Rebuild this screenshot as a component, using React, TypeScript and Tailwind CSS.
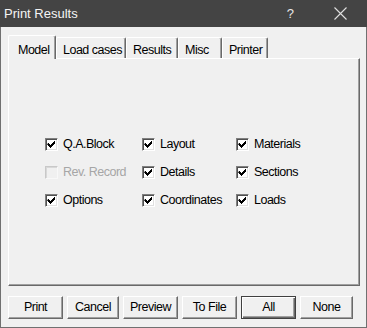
import React from "react";

const font = { fontFamily: '"Liberation Sans", Arial, sans-serif' };

function Check({ checked, disabled }: { checked: boolean; disabled?: boolean }) {
  return (
    <div
      className={
        "w-[13px] h-[13px] shrink-0 border-t border-l border-r border-b flex items-center justify-center " +
        (disabled
          ? "bg-[#f0f0f0] border-t-[#c8c8c8] border-l-[#c8c8c8] border-r-[#f8f8f8] border-b-[#f8f8f8] shadow-[inset_1px_1px_0_#d8d8d8]"
          : "bg-white border-t-[#808080] border-l-[#808080] border-r-white border-b-white shadow-[inset_1px_1px_0_#505050,inset_-1px_-1px_0_#e0e0e0]")
      }
    >
      {checked && (
        <svg width="9" height="9" viewBox="0 0 9 9" className="block">
          <path
            d="M1 3h1v1h1v1h1v-1h1v-1h1v-1h1v-1h1v3h-1v1h-1v1h-1v1h-1v1h-1v-1h-1v-1h-1v-1h-1z"
            fill="#000"
          />
        </svg>
      )}
    </div>
  );
}

function Item({ label, checked, disabled }: { label: string; checked: boolean; disabled?: boolean }) {
  return (
    <div className="flex items-center h-[28px]">
      <Check checked={checked} disabled={disabled} />
      <span
        className={
          "ml-[5px] text-[12.5px] tracking-[-0.5px] leading-none " +
          (disabled ? "text-[#a6a6a6]" : "text-black")
        }
      >
        {label}
      </span>
    </div>
  );
}

function Tab({ label, width, selected }: { label: string; width: string; selected?: boolean }) {
  if (selected) {
    return (
      <div
        className={
          width +
          " relative z-10 h-[24px] -mb-px bg-[#f0f0f0] border-t border-l border-white rounded-tl-[2px] rounded-tr-[2px] border-r border-r-[#696969] shadow-[inset_-1px_0_0_#a0a0a0] pl-[9px] pt-[5px] text-[12.5px] tracking-[-0.5px] text-black"
        }
      >
        {label}
      </div>
    );
  }
  return (
    <div
      className={
        width +
        " h-[21px] border-t border-l border-white rounded-tl-[2px] rounded-tr-[2px] border-r border-r-[#696969] shadow-[inset_-1px_0_0_#a0a0a0] pl-[6px] pt-[3px] text-[12.5px] tracking-[-0.5px] text-black"
      }
    >
      {label}
    </div>
  );
}

function Button({ label, width, isDefault }: { label: string; width: string; isDefault?: boolean }) {
  return (
    <div
      className={
        width +
        " h-[23px] flex items-center justify-center text-[12.5px] tracking-[-0.5px] text-black bg-[#f0f0f0] " +
        (isDefault
          ? "border border-[#404040] shadow-[inset_1px_1px_0_#ffffff,inset_-1px_-1px_0_#696969,inset_-2px_-2px_0_#a0a0a0]"
          : "border-t border-l border-white border-r border-b border-r-[#696969] border-b-[#696969] shadow-[inset_-1px_-1px_0_#a0a0a0]")
      }
    >
      {label}
    </div>
  );
}

export default function App() {
  return (
    <div className="w-[367px] h-[328px] flex flex-col bg-[#f0f0f0] overflow-hidden" style={font}>
      <div className="h-[27px] shrink-0 bg-[#444444] flex items-center text-white">
        <span className="ml-[4px] text-[13px] text-[#f4f4f4]">Print Results</span>
        <span className="ml-auto mr-[40px] text-[13px] text-[#e8e8e8]">?</span>
        <svg width="13" height="13" viewBox="0 0 13 13" className="mr-[20px]">
          <path d="M0.5 0.5L12.5 12.5M12.5 0.5L0.5 12.5" stroke="#e0e0e0" strokeWidth="1.1" />
        </svg>
      </div>
      <div className="flex-1 flex flex-col border-x border-b border-[#707070] pl-[7px] pr-[6px]">
        <div className="mt-[8px] h-[23px] flex items-end">
          <Tab label="Model" width="w-[48px]" selected />
          <Tab label="Load cases" width="w-[70px]" />
          <Tab label="Results" width="w-[52px]" />
          <Tab label="Misc" width="w-[44px]" />
          <Tab label="Printer" width="w-[46px]" />
        </div>
        <div className="h-[228px] border-t border-l border-white border-r border-b border-r-[#696969] border-b-[#696969] shadow-[inset_-1px_-1px_0_#a0a0a0] pl-[36px] pt-[71px]">
          <div className="grid grid-cols-[97px_94px_auto]">
            <Item label="Q.A.Block" checked />
            <Item label="Layout" checked />
            <Item label="Materials" checked />
            <Item label="Rev. Record" checked={false} disabled />
            <Item label="Details" checked />
            <Item label="Sections" checked />
            <Item label="Options" checked />
            <Item label="Coordinates" checked />
            <Item label="Loads" checked />
          </div>
        </div>
        <div className="mt-[10px] flex gap-[4px]">
          <Button label="Print" width="w-[55px]" />
          <Button label="Cancel" width="w-[52px]" />
          <Button label="Preview" width="w-[55px]" />
          <Button label="To File" width="w-[55px]" />
          <Button label="All" width="w-[55px]" isDefault />
          <Button label="None" width="w-[53px]" />
        </div>
      </div>
    </div>
  );
}
